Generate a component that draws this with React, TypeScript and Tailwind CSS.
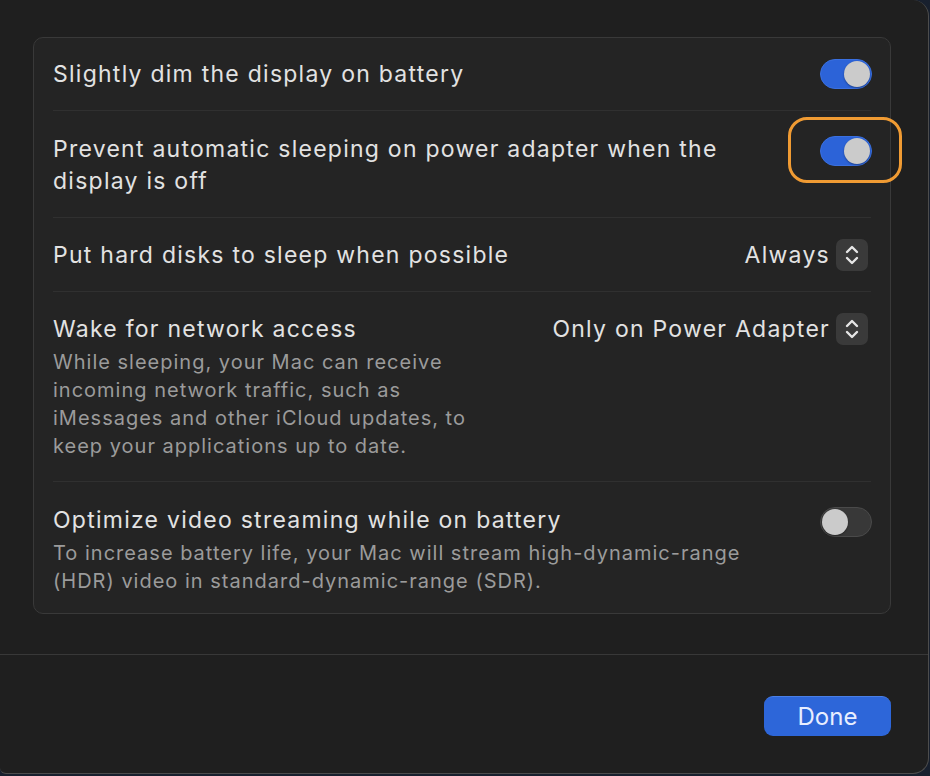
import React from 'react';

const Toggle: React.FC<{ on: boolean }> = ({ on }) => (
  <div
    className={
      on
        ? 'w-[52px] h-[30px] rounded-full bg-[#2c63d8] border border-[#3a70e0] flex items-center justify-end px-[1px] shrink-0'
        : 'w-[52px] h-[30px] rounded-full bg-[#383838] border border-[#4a4a4a] flex items-center justify-start px-[1px] shrink-0'
    }
  >
    <div className="w-[26px] h-[26px] rounded-full bg-[#cbcbcb] shadow-[0_1px_2px_rgba(0,0,0,0.35)]" />
  </div>
);

const Stepper: React.FC = () => (
  <div className="w-[32px] h-[32px] rounded-[7px] bg-[#3a3a3a] flex items-center justify-center shrink-0">
    <svg width="16" height="22" viewBox="0 0 16 22" fill="none" stroke="#e6e6e6" strokeWidth="2.4" strokeLinecap="round" strokeLinejoin="round">
      <path d="M3 8 L8 3 L13 8" />
      <path d="M3 14 L8 19 L13 14" />
    </svg>
  </div>
);

const Select: React.FC<{ value: string }> = ({ value }) => (
  <div className="flex items-center gap-[6px] shrink-0">
    <span className="text-[23px] leading-[32px] tracking-[1.25px] text-[#e2e2e2]">{value}</span>
    <Stepper />
  </div>
);

const Divider = () => <div className="h-px bg-[#303030] mx-[19px]" />;

export default function App() {
  return (
    <div className="w-[930px] h-[776px] bg-[#18202e] overflow-hidden" style={{ fontFamily: 'Inter, "Noto Sans", sans-serif' }}>
      <div className="w-[929px] h-[774px] bg-[#1f1f1f] border-r border-b border-[#4c4c4c] rounded-tr-[16px] rounded-br-[16px] rounded-bl-[6px] flex flex-col">
        <div className="pt-[37px] pl-[33px] h-[654px]">
          <div className="w-[858px] bg-[#242424] border border-[#393939] rounded-[10px] flex flex-col">
            {/* dim display */}
            <div className="flex items-center justify-between pl-[19px] pr-[18px] pt-[20px] pb-[20px]">
              <span className="text-[23px] leading-[32px] tracking-[1.25px] text-[#e2e2e2]">Slightly dim the display on battery</span>
              <Toggle on />
            </div>
            <Divider />

            {/* prevent sleeping */}
            <div className="flex items-start justify-between pl-[19px] pr-[18px] pt-[22px] pb-[20px]">
              <div className="text-[23px] leading-[32px] tracking-[1.25px] text-[#e2e2e2]">
                <div>Prevent automatic sleeping on power adapter when the</div>
                <div>display is off</div>
              </div>
              <div className="relative mt-[3px]">
                <Toggle on />
                <div className="absolute -left-[32px] -top-[19px] w-[114px] h-[66px] rounded-[19px] border-[3px] border-[#f09b33]" />
              </div>
            </div>
            <Divider />

            {/* hard disks */}
            <div className="flex items-center justify-between pl-[19px] pr-[22px] pt-[21px] pb-[20px]">
              <span className="text-[23px] leading-[32px] tracking-[1.25px] text-[#e2e2e2]">Put hard disks to sleep when possible</span>
              <Select value="Always" />
            </div>
            <Divider />

            {/* network access */}
            <div className="flex items-start justify-between pl-[19px] pr-[22px] pt-[21px] pb-[21px]">
              <div className="flex flex-col">
                <span className="text-[23px] leading-[32px] tracking-[1.25px] text-[#e2e2e2]">Wake for network access</span>
                <div className="mt-[3px] text-[20px] leading-[28px] tracking-[1px] text-[#9b9b9b]">
                  <div>While sleeping, your Mac can receive</div>
                  <div>incoming network traffic, such as</div>
                  <div>iMessages and other iCloud updates, to</div>
                  <div>keep your applications up to date.</div>
                </div>
              </div>
              <Select value="Only on Power Adapter" />
            </div>
            <Divider />

            {/* video streaming */}
            <div className="flex items-start justify-between pl-[19px] pr-[18px] pt-[22px] pb-[18px]">
              <div className="flex flex-col">
                <span className="text-[23px] leading-[32px] tracking-[1.25px] text-[#e2e2e2]">Optimize video streaming while on battery</span>
                <div className="mt-[3px] text-[20px] leading-[28px] tracking-[1px] text-[#9b9b9b]">
                  <div>To increase battery life, your Mac will stream high-dynamic-range</div>
                  <div>(HDR) video in standard-dynamic-range (SDR).</div>
                </div>
              </div>
              <div className="mt-[3px]">
                <Toggle on={false} />
              </div>
            </div>
          </div>
        </div>

        <div className="h-px bg-[#383838]" />

        <div className="flex justify-end pr-[37px] pt-[41px]">
          <button className="w-[127px] h-[40px] rounded-[9px] bg-[#2d66d9] border-t border-[#4a7fe6] text-[24px] text-[#e8eeff] flex items-center justify-center">
            Done
          </button>
        </div>
      </div>
    </div>
  );
}
